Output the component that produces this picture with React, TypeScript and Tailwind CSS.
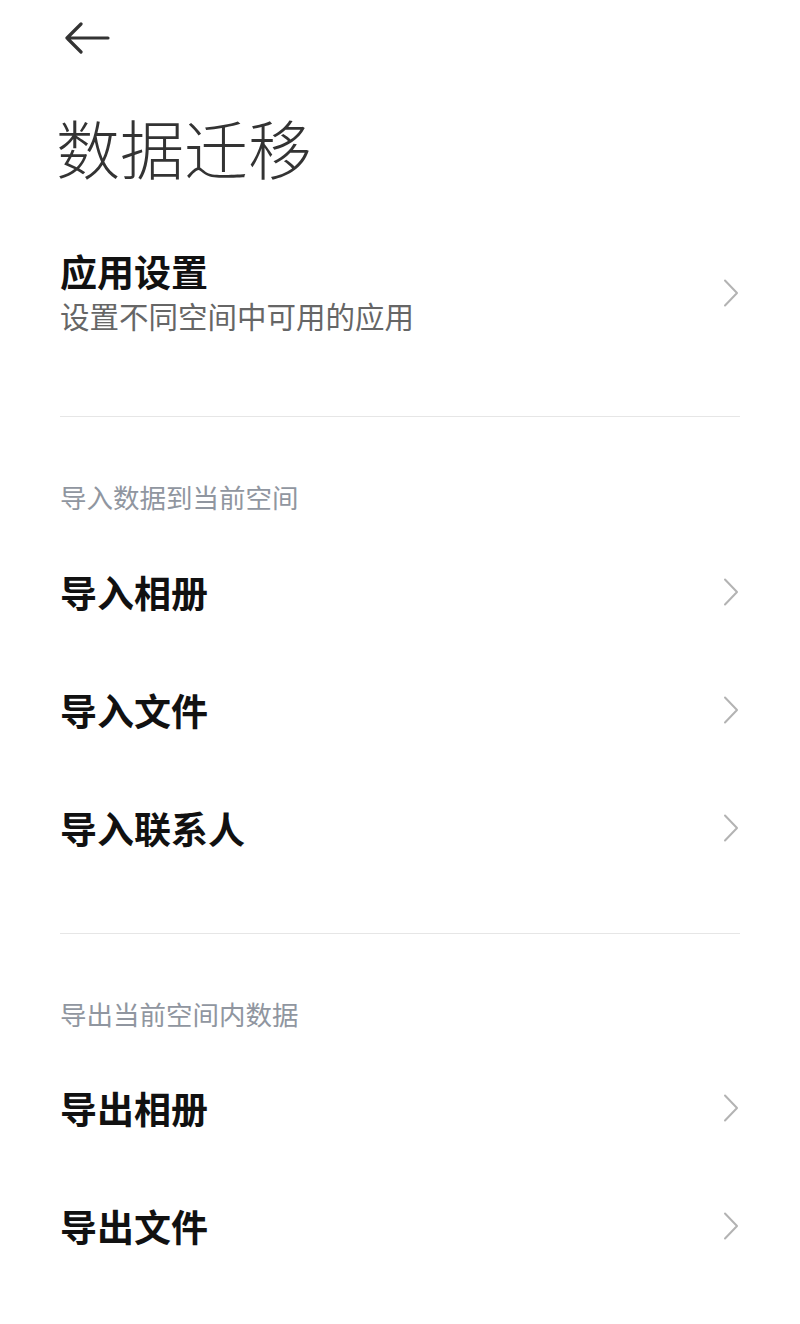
import React from 'react';

const font = { fontFamily: '"Noto Sans CJK SC", "Noto Sans", sans-serif' };

function Chevron() {
    return (
        <svg width="16" height="28" viewBox="0 0 16 28" fill="none" className="shrink-0">
            <polyline points="2,1.5 14,14 2,26.5" stroke="#b3b3b3" strokeWidth="2" strokeLinecap="round" strokeLinejoin="round" />
        </svg>
    );
}

function Row({ label }: { label: string }) {
    return (
        <div className="flex h-[118px] items-center justify-between pl-[60px] pr-[61px]">
            <span className="text-[37px] font-bold leading-none text-[#111]">{label}</span>
            <Chevron />
        </div>
    );
}

function SectionHeader({ label }: { label: string }) {
    return (
        <div className="px-[60px] pt-[62px] text-[26.5px] leading-[36px] text-[#9096a0]">{label}</div>
    );
}

export default function App() {
    return (
        <div className="min-h-[1324px] w-[800px] bg-white" style={font}>
            <div className="flex h-[76px] items-center pl-[64px]">
                <svg width="46" height="32" viewBox="0 0 46 32" fill="none">
                    <path d="M44 16H3M17 2L3 16L17 30" stroke="#333" strokeWidth="3.2" strokeLinecap="round" strokeLinejoin="round" />
                </svg>
            </div>

            <div className="flex h-[140px] items-center pl-[56px]">
                <h1 className="text-[64px] font-light leading-none text-[#333]">数据迁移</h1>
            </div>

            <div className="flex items-center justify-between pb-[79px] pl-[60px] pr-[61px] pt-[33px]">
                <div>
                    <div className="text-[37px] font-bold leading-[44px] text-[#111]">应用设置</div>
                    <div className="text-[29.5px] leading-[44px] text-[#666]">设置不同空间中可用的应用</div>
                </div>
                <Chevron />
            </div>

            <div className="mx-[60px] h-px bg-[#e6e6e6]" />

            <SectionHeader label="导入数据到当前空间" />
            <div className="pt-[18px]">
                <Row label="导入相册" />
                <Row label="导入文件" />
                <Row label="导入联系人" />
            </div>

            <div className="mx-[60px] mt-[46px] h-px bg-[#e6e6e6]" />

            <SectionHeader label="导出当前空间内数据" />
            <div className="pt-[17px]">
                <Row label="导出相册" />
                <Row label="导出文件" />
            </div>
        </div>
    );
}
